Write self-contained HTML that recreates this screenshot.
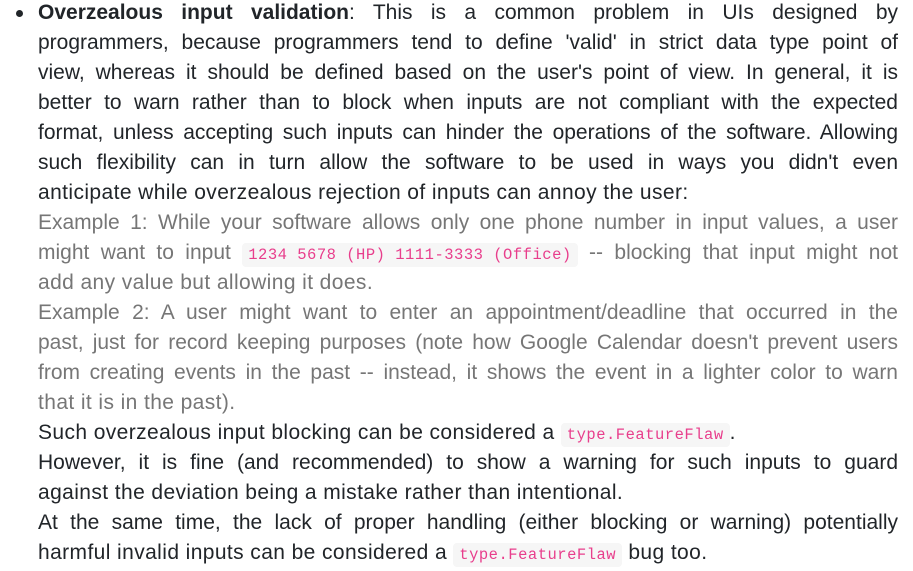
<!DOCTYPE html>
<html><head><style>
body{margin:0;background:#fff;width:913px;height:571px;overflow:hidden;font-family:"Liberation Sans",sans-serif;font-size:21px;color:#212529}
.w{position:absolute;left:38px;top:-2px;width:860px}
.l{height:30px;line-height:30px;text-align:justify;text-align-last:justify;overflow:hidden}
.e{text-align-last:left;letter-spacing:0.4px}
.g{color:#767676}
code{display:inline-block;line-height:24px;font-family:"Liberation Mono",monospace;font-size:15.5px;letter-spacing:0.5px;color:#e83e8c;background:#f6f6f6;border-radius:4px;padding:0 6px;white-space:pre}
.b{position:absolute;left:16px;top:10px;width:7px;height:7px;border-radius:50%;background:#212529}
</style></head><body>
<div class="b"></div>
<div class="w">
<div class="l"><b>Overzealous input validation</b>: This is a common problem in UIs designed by</div>
<div class="l">programmers, because programmers tend to define 'valid' in strict data type point of</div>
<div class="l">view, whereas it should be defined based on the user's point of view. In general, it is</div>
<div class="l">better to warn rather than to block when inputs are not compliant with the expected</div>
<div class="l">format, unless accepting such inputs can hinder the operations of the software. Allowing</div>
<div class="l">such flexibility can in turn allow the software to be used in ways you didn't even</div>
<div class="l e">anticipate while overzealous rejection of inputs can annoy the user:</div>
<div class="l g">Example 1: While your software allows only one phone number in input values, a user</div>
<div class="l g">might want to input <code>1234 5678 (HP) 1111-3333 (Office)</code> -- blocking that input might not</div>
<div class="l g e">add any value but allowing it does.</div>
<div class="l g">Example 2: A user might want to enter an appointment/deadline that occurred in the</div>
<div class="l g">past, just for record keeping purposes (note how Google Calendar doesn't prevent users</div>
<div class="l g">from creating events in the past -- instead, it shows the event in a lighter color to warn</div>
<div class="l g e">that it is in the past).</div>
<div class="l e">Such overzealous input blocking can be considered a <code>type.FeatureFlaw</code>.</div>
<div class="l">However, it is fine (and recommended) to show a warning for such inputs to guard</div>
<div class="l e">against the deviation being a mistake rather than intentional.</div>
<div class="l">At the same time, the lack of proper handling (either blocking or warning) potentially</div>
<div class="l e">harmful invalid inputs can be considered a <code>type.FeatureFlaw</code> bug too.</div>
</div>
</body></html>
